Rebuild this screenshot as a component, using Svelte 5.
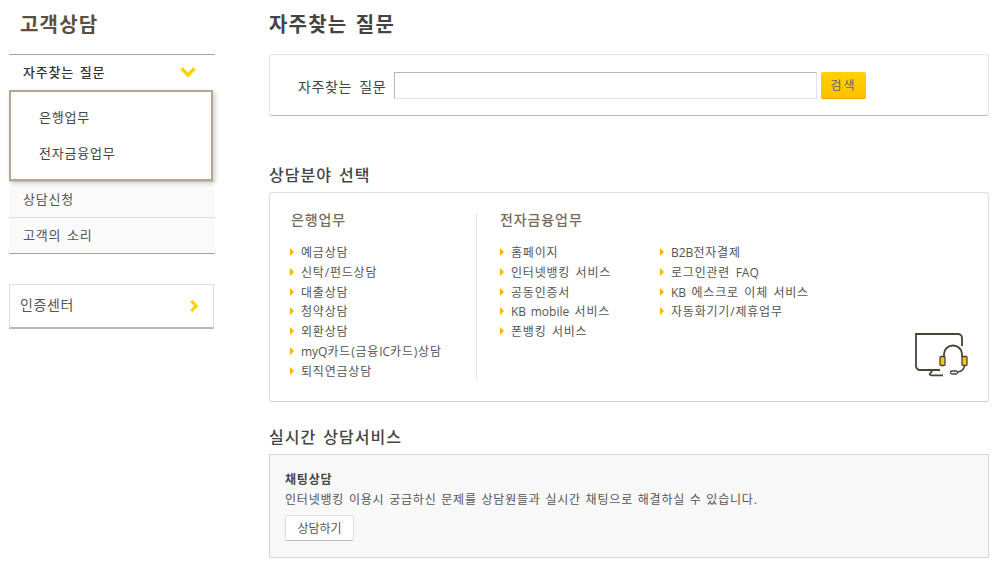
<script>
	const bank = ['예금상담', '신탁/펀드상담', '대출상담', '청약상담', '외환상담', 'myQ카드(금융IC카드)상담', '퇴직연금상담'];
	const elecA = ['홈페이지', '인터넷뱅킹 서비스', '공동인증서', 'KB mobile 서비스', '폰뱅킹 서비스'];
	const elecB = ['B2B전자결제', '로그인관련 FAQ', 'KB 에스크로 이체 서비스', '자동화기기/제휴업무'];

	// latin runs sit tighter than the hangul around them
	const parts = (s) => s.split(/([A-Za-z0-9]+(?: [a-z]+)?)/);
</script>

{#snippet links(items)}
	<ul class="links">
		{#each items as item}
			<li><a href="#top">{#each parts(item) as part, i}{#if i % 2}<span class="lat">{part}</span>{:else}{part}{/if}{/each}</a></li>
		{/each}
	</ul>
{/snippet}

<div class="page">
	<aside class="side">
		<h2 class="side-title">고객상담</h2>
		<nav class="menu">
			<div class="menu-open">
				<span>자주찾는 질문</span>
				<svg width="16" height="11" viewBox="0 0 16 11"><path d="M1.500 1.500 8 8l6.500-6.500" fill="none" stroke="#ffd200" stroke-width="3.600" /></svg>
			</div>
			<div class="dropdown">
				<a href="#top">은행업무</a>
				<a href="#top">전자금융업무</a>
			</div>
			<a class="menu-item first" href="#top">상담신청</a>
			<a class="menu-item last" href="#top">고객의 소리</a>
		</nav>
		<div class="cert">
			<span>인증센터</span>
			<svg width="8" height="12" viewBox="0 0 8 12"><path d="M1.500 1 6 6l-4.500 5" fill="none" stroke="#ffd200" stroke-width="3.200" /></svg>
		</div>
	</aside>

	<main class="main">
		<h1>자주찾는 질문</h1>
		<form class="search">
			<label for="q">자주찾는 질문</label>
			<input id="q" type="text" />
			<button type="button">검색</button>
		</form>

		<h3 class="first">상담분야 선택</h3>
		<section class="fields">
			<div class="col-bank">
				<h4>은행업무</h4>
				{@render links(bank)}
			</div>
			<div class="col-elec">
				<h4>전자금융업무</h4>
				<div class="elec-lists">
					{@render links(elecA)}
					{@render links(elecB)}
				</div>
			</div>
			<svg class="counsel" width="54" height="44" viewBox="0 0 54 44" fill="none">
				<path d="M25 37H5.500a4 4 0 0 1-4.500-4V1h42a4 4 0 0 1 4 4v8" stroke="#4a4237" stroke-width="1.800" />
				<path d="M17 37c0 2-1 2.500-2 3.500-.8 1 0 1.800 1.500 1.800H28" stroke="#4a4237" stroke-width="1.800" />
				<path d="M29 24v-3a9 8.500 0 0 1 18 0v3" stroke="#4a4237" stroke-width="1.800" />
				<path d="M49.500 32c0 4-3 6.500-7 7" stroke="#4a4237" stroke-width="1.500" />
				<rect x="35.500" y="38" width="7" height="3" rx="1.500" stroke="#4a4237" stroke-width="1.300" />
				<rect x="25" y="23.500" width="5" height="9" rx="1" fill="#f5c518" stroke="#4a4237" stroke-width="1.300" />
				<rect x="47" y="23.500" width="5" height="9" rx="1" fill="#f5c518" stroke="#4a4237" stroke-width="1.300" />
			</svg>
		</section>

		<h3 class="second">실시간 상담서비스</h3>
		<section class="chat">
			<strong>채팅상담</strong>
			<p>인터넷뱅킹 이용시 궁금하신 문제를 상담원들과 실시간 채팅으로 해결하실 수 있습니다.</p>
			<button type="button">상담하기</button>
		</section>
	</main>
</div>

<style>
	:global(body) {
		margin: 0;
		background: #fff;
		font-family: "Open Sans", "Noto Sans CJK KR", sans-serif;
		font-size: 12px;
		color: #555;
		letter-spacing: 0.8px;
		word-spacing: 1.5px;
	}

	a {
		color: inherit;
		text-decoration: none;
	}

	.page {
		display: flex;
		width: 998px;
		height: 563px;
		overflow: hidden;
	}

	.side {
		width: 206px;
		margin-left: 9px;
		flex: none;
	}

	.side-title {
		margin: 0;
		height: 54px;
		padding: 11px 0 0 11px;
		box-sizing: border-box;
		font-size: 20px;
		line-height: 28px;
		font-weight: 700;
		letter-spacing: 1.2px;
		color: #5c4f3f;
	}

	.menu {
		border-top: 1px solid #b8a48f;
	}

	.menu-open {
		display: flex;
		justify-content: space-between;
		align-items: center;
		height: 35px;
		padding: 0 19px 2px 14px;
		box-sizing: border-box;
		font-size: 13px;
		font-weight: 500;
		color: #333;
	}

	.menu-open svg {
		margin-top: 1px;
	}

	.dropdown {
		display: flex;
		flex-direction: column;
		gap: 14px;
		width: 204px;
		height: 91px;
		box-sizing: border-box;
		padding: 14px 0 0 28px;
		border: 2px solid #b8a48f;
		background: #fff;
		box-shadow: 2px 2px 5px rgba(0, 0, 0, 0.2);
		position: relative;
		font-size: 13px;
		line-height: 22px;
		color: #444;
	}

	.menu-item {
		display: block;
		height: 36px;
		box-sizing: border-box;
		padding-left: 14px;
		background: #fafafa;
		border-bottom: 1px solid #ddd;
		font-size: 13px;
		line-height: 34px;
		color: #555;
	}

	.menu-item.first {
		height: 37px;
		border-top: 1px solid #ddd;
	}

	.menu-item.last {
		border-bottom-color: #b0a090;
	}

	.cert {
		display: flex;
		justify-content: space-between;
		align-items: center;
		width: 205px;
		height: 45px;
		box-sizing: border-box;
		margin-top: 30px;
		padding: 0 15px 0 10px;
		border: 1px solid #ddd;
		border-bottom: 2px solid #bbb;
		font-size: 14px;
		letter-spacing: 0.6px;
		color: #555;
	}

	.cert span {
		margin-bottom: 5px;
	}

	.main {
		width: 720px;
		margin-left: 54px;
		flex: none;
	}

	h1 {
		margin: 0;
		height: 54px;
		padding-top: 10px;
		box-sizing: border-box;
		font-size: 20px;
		line-height: 30px;
		font-weight: 700;
		letter-spacing: 1.2px;
		word-spacing: 2px;
		color: #444;
	}

	.search {
		display: flex;
		align-items: center;
		height: 62px;
		box-sizing: border-box;
		padding: 1px 0 0 28px;
		border: 1px solid #e5e5e5;
		border-bottom: 1px solid #bbb;
		border-radius: 3px;
	}

	.search label {
		width: 96px;
		flex: none;
		font-size: 14px;
		letter-spacing: 0.6px;
		word-spacing: 3px;
		color: #444;
	}

	.search input {
		width: 423px;
		height: 27px;
		box-sizing: border-box;
		border: 1px solid #e3e3e3;
		border-top-color: #b5b5b5;
		border-left-color: #b5b5b5;
		padding: 0;
		margin-right: 4px;
	}

	.search button {
		width: 45px;
		height: 27px;
		padding: 0;
		border: 0;
		border-bottom: 1px solid #f29f00;
		border-radius: 2px;
		background: linear-gradient(#ffd200, #ffc000);
		font: inherit;
		letter-spacing: 2px;
		color: #666;
	}

	h3 {
		margin: 0;
		font-size: 16px;
		line-height: 22px;
		font-weight: 500;
		letter-spacing: 1px;
		word-spacing: 2px;
		color: #444;
	}

	h3.first {
		margin-top: 48px;
		margin-bottom: 6px;
	}

	h3.second {
		margin-top: 24px;
		margin-bottom: 6px;
	}

	.fields {
		position: relative;
		display: flex;
		height: 210px;
		box-sizing: border-box;
		padding-top: 20px;
		border: 1px solid #ddd;
		border-bottom-color: #ccc;
		border-radius: 3px;
	}

	.col-bank {
		width: 207px;
		height: 168px;
		box-sizing: border-box;
		padding-left: 20px;
		border-right: 1px solid #e5e5e5;
	}

	.col-bank h4 {
		margin-left: 1px;
	}

	.col-elec {
		padding-left: 23px;
	}

	h4 {
		margin: -4px 0 12px;
		font-size: 14px;
		line-height: 22px;
		font-weight: 500;
		letter-spacing: 0.9px;
		color: #776a5c;
	}

	.elec-lists {
		display: flex;
	}

	.elec-lists .links {
		width: 160px;
	}

	.links {
		margin: 0;
		padding: 0;
		list-style: none;
	}

	.links li {
		position: relative;
		padding-left: 11px;
		height: 19.830px;
		line-height: 20px;
		font-size: 12px;
		white-space: nowrap;
		color: #555;
	}

	.links li::before {
		content: '';
		position: absolute;
		left: 0;
		top: 5px;
		border-left: 4px solid #fdb400;
		border-top: 4px solid transparent;
		border-bottom: 4px solid transparent;
	}

	.lat {
		letter-spacing: 0;
	}

	.counsel {
		position: absolute;
		left: 645px;
		top: 140px;
	}

	.chat {
		height: 104px;
		box-sizing: border-box;
		padding: 15px 15px 0;
		background: #f8f8f8;
		border: 1px solid #d5d5d5;
	}

	.chat strong {
		display: block;
		font-size: 12px;
		line-height: 20px;
		font-weight: 700;
		color: #444;
	}

	.chat p {
		margin: 0 0 5px;
		font-size: 12px;
		line-height: 20px;
		word-spacing: 0.8px;
		color: #555;
	}

	.chat button {
		width: 69px;
		height: 26px;
		padding: 0;
		background: #fff;
		border: 1px solid #ddd;
		border-bottom-color: #bbb;
		border-radius: 2px;
		font: inherit;
		color: #555;
	}
</style>
